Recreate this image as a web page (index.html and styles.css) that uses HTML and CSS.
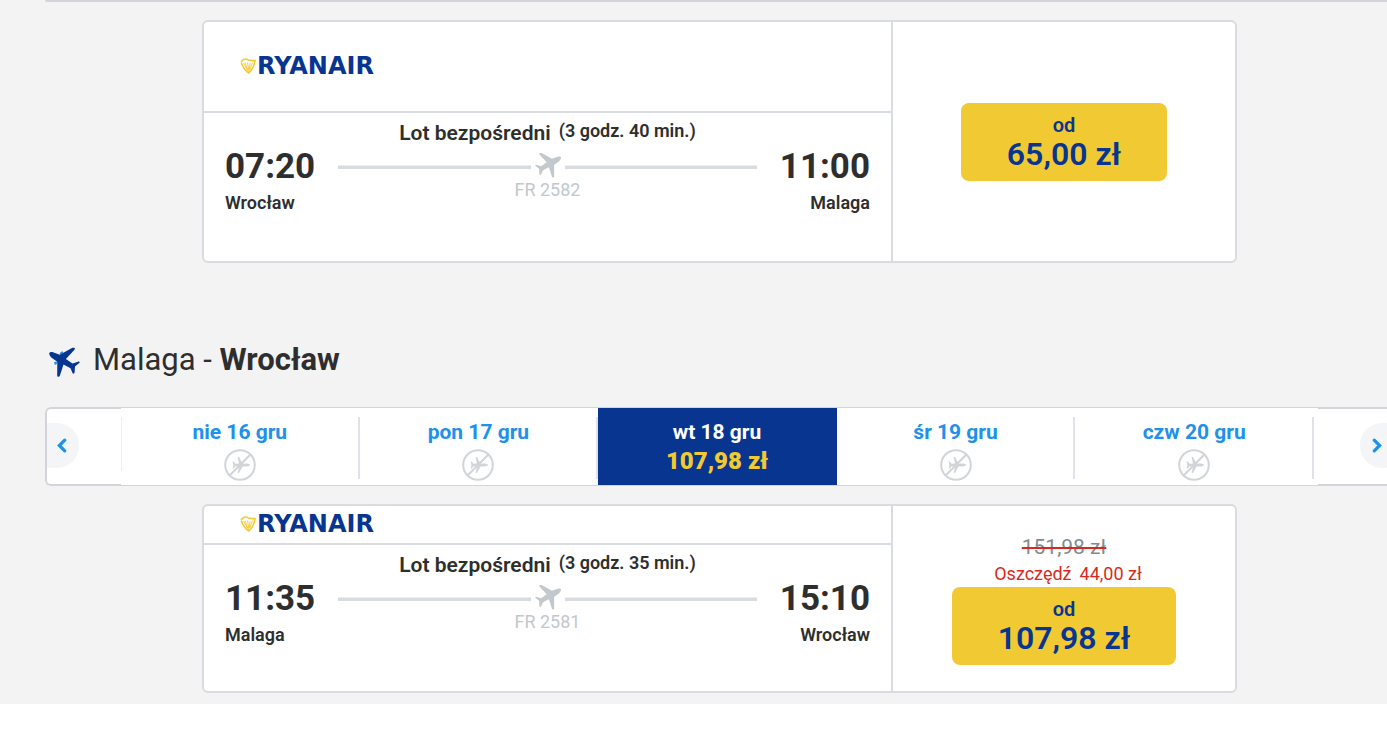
FILE: index.html
```html
<!DOCTYPE html>
<html lang="pl">
<head>
  <meta charset="UTF-8">
  <meta name="viewport" content="width=device-width, initial-scale=1.0">
  <title>Malaga - Wrocław</title>
  <link rel="stylesheet" href="styles.css">
</head>
<body>
  <svg class="defs" aria-hidden="true">
    <symbol id="plane" viewBox="0 0 33 32">
      <path d="M1.200 7.800C1 6.200 3 5.900 5 6.200L11.800 8.700 23.500 2.200C25 1.600 27 1.700 26.900 2.800 26.800 3.600 26 4.300 25.300 5L17.900 12.900 24.500 17.600 30 15.700C31 15.400 32 16 31.500 16.700L27 20.500 26.600 26.600C26.300 28 24.800 28 24.500 26.900L22.500 22.200 15.500 18.600 12 29.300C11.400 31.200 9.300 31.300 9.200 29.600L9.300 15.800 3.600 11.800C2.300 10.600 1.400 9 1.200 7.800Z"/>
    </symbol>
    <symbol id="no-flight" viewBox="0 0 32 32">
      <circle cx="16" cy="16" r="14.800" fill="none" stroke="currentColor" stroke-width="2"/>
      <path d="M5.800 26.200L26.200 5.800" stroke="currentColor" stroke-width="2"/>
      <path d="M26 16C26 15.200 24 14.600 22.500 14.600L18.500 14.500 15 8H13.600L15 14.500 11.500 14.700 9.800 12.400H8.600L9.400 16 8.600 19.600H9.800L11.500 17.300 15 17.500 13.600 24H15L18.500 17.500 22.500 17.400C24 17.400 26 16.800 26 16Z" fill="currentColor"/>
    </symbol>
    <symbol id="harp" viewBox="0 0 16 16">
      <path d="M1.500 3C4 .8 6 .6 7.500 1.700 9.500 3 12 2.700 15 2.500 14.500 7 12 12 8.800 15 5.500 13 3 9.500 1.200 4.500" fill="none" stroke="currentColor" stroke-width="1.600"/>
      <path d="M.5 3.300L3.300 3.300M5 4.500L8.500 14M7.500 4.500L9 13M10 4.800L9.400 12M12.500 4.500L9.800 12M3.500 5L7.500 12" fill="none" stroke="currentColor" stroke-width=".9"/>
    </symbol>
  </svg>

  <main class="page">
    <div class="wrapper">
      <div class="strip-end"></div>

      <section class="flight flight-tall">
        <div class="flight-info">
          <header class="carrier">
            <svg class="harp"><use href="#harp"/></svg>
            <span>RYANAIR</span>
          </header>
          <div class="leg">
            <p class="summary"><strong>Lot bezpośredni</strong> <span>(3 godz. 40 min.)</span></p>
            <div class="route">
              <div class="stop">
                <time>07:20</time>
                <span>Wrocław</span>
              </div>
              <div class="path">
                <div class="line"><svg><use href="#plane"/></svg></div>
                <span>FR 2582</span>
              </div>
              <div class="stop stop-end">
                <time>11:00</time>
                <span>Malaga</span>
              </div>
            </div>
          </div>
        </div>
        <div class="price">
          <button class="buy" type="button"><span>od</span><strong>65,00 zł</strong></button>
        </div>
      </section>

      <h2 class="direction">
        <svg><path class="engine" d="M12.400 8.500L13.400 6.800 15 6.300M9.500 16.500L7.300 16.800 7.600 18.600"/><use href="#plane"/></svg>
        <span>Malaga - <strong>Wrocław</strong></span>
      </h2>

      <nav class="dates" aria-label="Daty">
        <div class="side side-prev">
          <button class="arrow" type="button" aria-label="Poprzednie">
            <svg viewBox="0 0 10 14"><path d="M8 2L3 7l5 5"/></svg>
          </button>
        </div>
        <div class="days">
          <a class="day" href="#"><span>nie 16 gru</span><svg><use href="#no-flight"/></svg></a>
          <a class="day" href="#"><span>pon 17 gru</span><svg><use href="#no-flight"/></svg></a>
          <a class="day active" href="#"><span>wt 18 gru</span><strong>107,98 zł</strong></a>
          <a class="day" href="#"><span>śr 19 gru</span><svg><use href="#no-flight"/></svg></a>
          <a class="day" href="#"><span>czw 20 gru</span><svg><use href="#no-flight"/></svg></a>
        </div>
        <div class="side side-next">
          <button class="arrow" type="button" aria-label="Następne">
            <svg viewBox="0 0 10 14"><path d="M2 2l5 5-5 5"/></svg>
          </button>
        </div>
      </nav>

      <section class="flight">
        <div class="flight-info">
          <header class="carrier">
            <svg class="harp"><use href="#harp"/></svg>
            <span>RYANAIR</span>
          </header>
          <div class="leg">
            <p class="summary"><strong>Lot bezpośredni</strong> <span>(3 godz. 35 min.)</span></p>
            <div class="route">
              <div class="stop">
                <time>11:35</time>
                <span>Malaga</span>
              </div>
              <div class="path">
                <div class="line"><svg><use href="#plane"/></svg></div>
                <span>FR 2581</span>
              </div>
              <div class="stop stop-end">
                <time>15:10</time>
                <span>Wrocław</span>
              </div>
            </div>
          </div>
        </div>
        <div class="price">
          <del>151,98 zł</del>
          <p class="saving"><span>Oszczędź</span><span>44,00 zł</span></p>
          <button class="buy" type="button"><span>od</span><strong>107,98 zł</strong></button>
        </div>
      </section>
    </div>
  </main>
</body>
</html>
```

FILE: styles.css
```css
* {
  box-sizing: border-box;
}

body {
  margin: 0;
  background: #fff;
  color: #2e2e2e;
  font-family: Roboto, "Liberation Sans", sans-serif;
}

p,
h2 {
  margin: 0;
}

button {
  border: none;
  font-family: inherit;
  cursor: pointer;
}

.defs {
  display: none;
}

.page {
  background: #f3f3f3;
  padding-bottom: 11px;
  overflow: hidden;
}

/* runs a little past the right edge of the window */
.wrapper {
  margin: 0 -7px 0 45px;
}

.strip-end {
  height: 2px;
  margin-bottom: 18px;
  background: #d1d5d9;
  border-radius: 0 0 0 6px;
}

/* Flight card */
.flight {
  display: grid;
  grid-template-columns: 1fr 342px;
  margin: 0 157px;
  background: #fff;
  border: 2px solid #d8dce1;
  border-radius: 6px;
}

.flight-tall {
  min-height: 243px;
}

.flight-info {
  border-right: 2px solid #d8dce1;
}

.carrier {
  display: flex;
  align-items: center;
  height: 39px;
  padding: 0 36px 2px;
  border-bottom: 2px solid #d8dce1;
  color: #073590;
  font: bold 24px/24px "DejaVu Sans", sans-serif;
}

.flight-tall .carrier {
  height: 91px;
}

.harp {
  width: 16px;
  height: 16px;
  margin-right: 1px;
  color: #f1c933;
}

.leg {
  padding: 6px 21px 46px;
}

.summary {
  display: flex;
  justify-content: center;
  gap: 8px;
  font-size: 21px;
  line-height: 28px;
}

.summary strong {
  font-weight: 600;
}

.summary span {
  font-size: 18px;
  font-weight: 600;
  line-height: 24px;
}

.route {
  display: flex;
  gap: 23px;
}

.stop {
  display: flex;
  flex-direction: column;
  font-size: 18px;
  font-weight: 600;
  line-height: 20px;
}

.stop time {
  margin-bottom: 6px;
  font-size: 35px;
  font-weight: 700;
  line-height: 40px;
}

.stop-end {
  text-align: right;
}

.path {
  flex: 1;
  padding-top: 3px;
  color: #c3c8cd;
  font-size: 18px;
  line-height: 20px;
  text-align: center;
}

.line {
  display: flex;
  align-items: center;
  gap: 3px;
  height: 30px;
}

.line::before,
.line::after {
  content: "";
  flex: 1;
  height: 3px;
  margin-top: 3px;
  border-top: 1px solid #eceef0;
  background: #d8dce1;
}

.line svg {
  width: 28px;
  height: 28px;
  fill: #c3c8cd;
  transform: scaleX(-1);
}

/* Price column */
.price {
  display: flex;
  flex-direction: column;
  align-items: center;
  justify-content: center;
}

.price del {
  color: #828a91;
  font-size: 21px;
  line-height: 28px;
  text-decoration: line-through #d9291c 2px;
}

.saving {
  display: flex;
  gap: 8px;
  padding-left: 8px;
  color: #d9291c;
  font-size: 18px;
  line-height: 26px;
}

.buy {
  display: flex;
  flex-direction: column;
  align-items: center;
  height: 78px;
  padding: 9px 46px;
  border-radius: 8px;
  background: #f1c933;
  color: #073590;
  font-size: 20px;
  font-weight: 600;
  line-height: 26px;
}

.buy strong {
  font-size: 32px;
  font-weight: 600;
  line-height: 32px;
}

/* Return direction heading */
.direction {
  display: flex;
  align-items: center;
  gap: 12px;
  padding: 77px 3px 27px;
  font-size: 31px;
  font-weight: 400;
  line-height: 40px;
}

.direction strong {
  font-weight: 700;
}

.direction svg {
  width: 33px;
  height: 32px;
  margin-top: 4px;
  fill: #073590;
}

.direction .engine {
  fill: none;
  stroke: #2091eb;
  stroke-width: 2;
}

/* Date carousel */
.dates {
  display: flex;
  height: 79px;
  margin-bottom: 18px;
  background: #fff;
  border-radius: 6px;
}

.side {
  display: flex;
  width: 76px;
  padding-top: 14px;
  border: 2px solid #d1d5d9;
}

.side-prev {
  border-right: none;
  border-radius: 6px 0 0 6px;
}

.side-next {
  justify-content: flex-end;
  border-left: none;
  border-radius: 0 6px 6px 0;
}

.arrow {
  width: 32px;
  height: 45px;
  padding: 0 12px 0 9px;
  background: #f3f5f7;
  border-radius: 0 22px 22px 0;
}

.side-next .arrow {
  padding: 0 9px 0 12px;
  border-radius: 22px 0 0 22px;
}

.arrow svg {
  display: block;
  width: 11px;
  height: 15px;
  fill: none;
  stroke: #2091eb;
  stroke-width: 3;
  stroke-linecap: round;
}

.days {
  display: flex;
  flex: 1;
  padding-right: 4px;
  border: 1px solid #d1d5d9;
  border-width: 1px 0;
}

.day {
  position: relative;
  display: flex;
  flex: 1;
  flex-direction: column;
  align-items: center;
  padding: 10px 1px 0 0;
  color: #2091eb;
  font-size: 21px;
  font-weight: 700;
  line-height: 28px;
  text-decoration: none;
}

.day::after {
  content: "";
  position: absolute;
  top: 9px;
  right: 0;
  width: 2px;
  height: 62px;
  background: #dfe3e7;
}

.day:first-child::before {
  content: "";
  position: absolute;
  top: 9px;
  left: 0;
  width: 1px;
  height: 54px;
  background: #eceef0;
}

.day.active {
  background: #073590;
  color: #fff;
}

.day.active::after {
  display: none;
}

.day strong {
  color: #f1c933;
  font-size: 24px;
  line-height: 30px;
}

.day svg {
  width: 32px;
  height: 32px;
  margin-top: 3px;
  color: #d1d5d9;
}
```
